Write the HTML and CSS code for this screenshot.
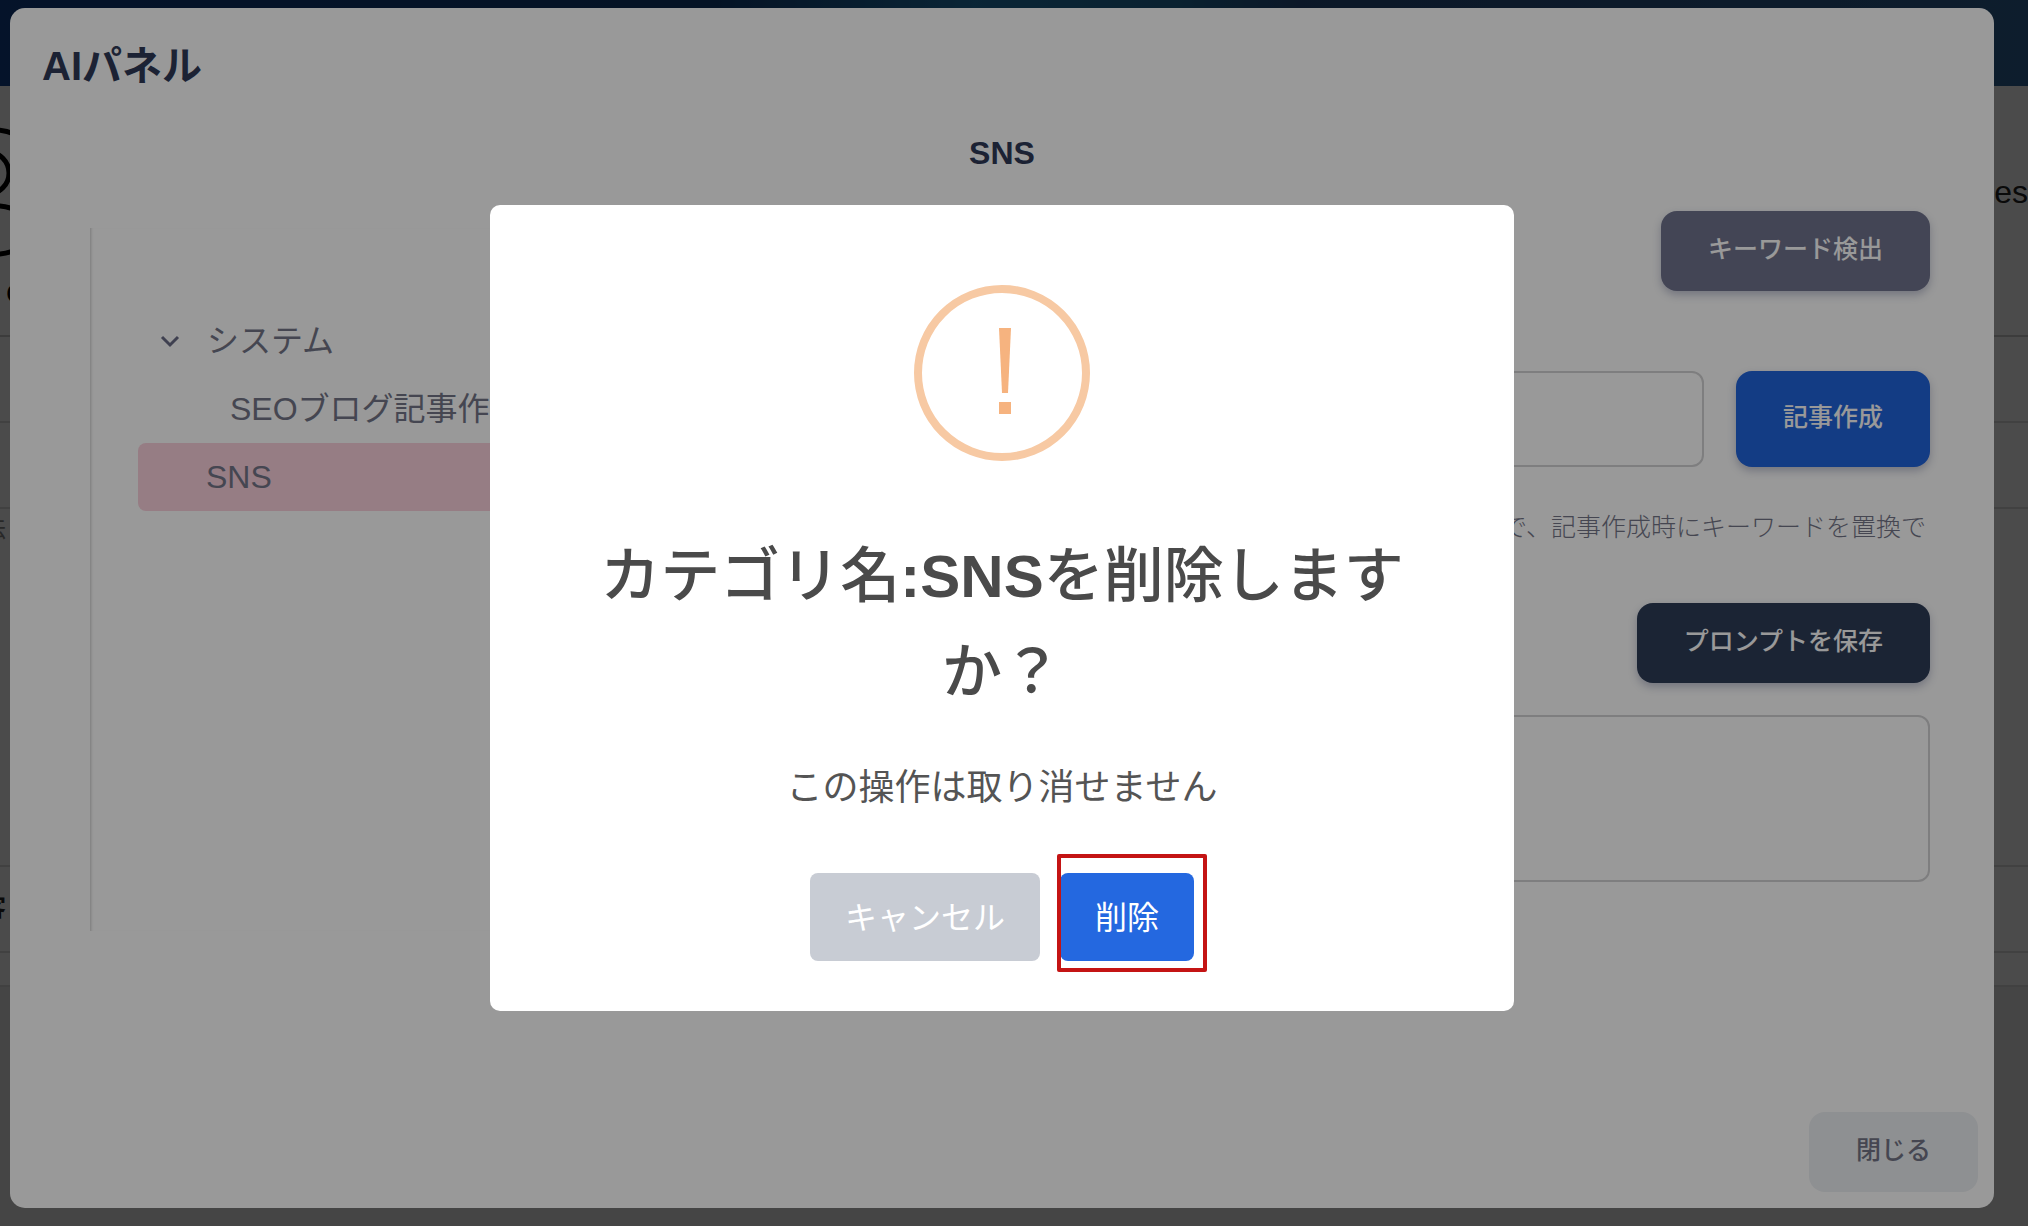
FILE: index.html
```html
<!DOCTYPE html>
<html lang="ja">
<head>
  <meta charset="UTF-8" />
  <meta name="viewport" content="width=device-width, initial-scale=1" />
  <title>AIパネル</title>
  <link rel="stylesheet" href="styles.css">
</head>
<body>
  <!-- Page behind the panel -->
  <div class="page">
    <div class="page-header"></div>
    <div class="page-bar">
      <div class="page-user">
        <svg class="avatar" width="20" height="140" viewBox="0 0 20 140" fill="none" stroke="#000" stroke-width="5">
          <path d="M-4 10C2 10 7 11 14 14" />
          <circle cx="-12" cy="53" r="21" />
          <ellipse cx="-3" cy="110" rx="32" ry="24" />
        </svg>
        <span>C</span>
      </div>
      <span class="page-crumb">Pages</span>
    </div>
    <div class="page-row"></div>
    <div class="page-row"></div>
    <div class="page-row page-row-tall"><span>法</span></div>
    <div class="page-row"><b>客</b></div>
    <div class="page-row page-row-last"></div>
  </div>

  <!-- AI panel -->
  <div class="overlay overlay-panel">
    <div class="panel">
      <h1 class="panel-title">AIパネル</h1>
      <h2 class="panel-category">SNS</h2>

      <div class="panel-body">
        <div class="tree">
          <div class="tree-row">
            <svg class="chevron" width="22" height="22" viewBox="0 0 22 22" fill="none" stroke="#6a6c86" stroke-width="3">
              <path d="M3 10l8 8 8-8" />
            </svg>
            <span>システム</span>
          </div>
          <div class="tree-row tree-child">SEOブログ記事作成</div>
          <div class="tree-row tree-leaf active">SNS</div>
        </div>

        <form class="prompt">
          <button type="button" class="btn btn-gray">キーワード検出</button>
          <div class="keyword-row">
            <input type="text" class="field" id="keyword" aria-label="キーワード" />
            <button type="button" class="btn btn-blue">記事作成</button>
          </div>
          <p class="help">で、記事作成時にキーワードを置換で</p>
          <button type="button" class="btn btn-navy">プロンプトを保存</button>
          <textarea class="field field-area" id="prompt" aria-label="プロンプト"></textarea>
        </form>
      </div>

      <div class="panel-footer">
        <button type="button" class="btn btn-light">閉じる</button>
      </div>
    </div>
  </div>

  <!-- Delete confirmation -->
  <div class="overlay overlay-dialog">
    <div class="dialog" role="alertdialog" aria-labelledby="dialogTitle" aria-describedby="dialogText">
      <svg class="dialog-icon" width="176" height="176" viewBox="0 0 176 176">
        <circle cx="88" cy="88" r="84" fill="none" stroke="#f7c9a3" stroke-width="8" />
        <path d="M85 43h12l-3 65h-6z" fill="#f6b37f" />
        <path d="M85 117h12v12h-12z" fill="#f6b37f" />
      </svg>
      <h2 class="dialog-title" id="dialogTitle">カテゴリ名<b>:SNS</b>を削除しますか？</h2>
      <p class="dialog-text" id="dialogText">この操作は取り消せません</p>
      <div class="dialog-actions">
        <button type="button" class="dialog-btn cancel">キャンセル</button>
        <button type="button" class="dialog-btn confirm">削除</button>
      </div>
    </div>
  </div>
</body>
</html>
```
FILE: styles.css
```css
* { box-sizing: border-box; }
body { margin: 0; font-family: "Liberation Sans", "Noto Sans CJK JP", sans-serif; font-size: 32px; color: #747688; }
h1, h2, p { margin: 0; }
button, input, textarea { font-family: inherit; }

/* page behind */
.page { height: 100vh; overflow: hidden; background: #e8e8e8; color: #222; }
.page-header { height: 86px; background: linear-gradient(90deg, #11408c 0%, #11407c 35%, #207cb4 48%, #1e6fa0 58%, #264f86 64%, #2d6296 100%); }
.page-bar { display: flex; justify-content: space-between; height: 251px; padding-top: 34px; background: #fafafa; border-bottom: 2px solid #c8c8c8; }
.page-user { display: flex; flex-direction: column; }
.page-user span { margin: 14px 0 0 6px; font-size: 28px; line-height: 40px; color: #000; }
.page-crumb { padding-top: 52px; line-height: 40px; }
.avatar { display: block; }
.page-row { display: flex; align-items: center; height: 86px; padding-bottom: 2px; background: #fafafa; border-bottom: 2px solid #dadada; font-size: 24px; }
.page-row span, .page-row b { margin-left: -18px; line-height: 32px; }
.page-row span { color: #888; }
.page-row-tall { height: 358px; align-items: flex-start; padding-top: 4px; }
.page-row-last { height: 34px; }

.overlay { position: fixed; top: 0; left: 0; width: 100%; height: 100%; }
.overlay-panel { padding: 8px 34px 18px 10px; background: rgba(0, 0, 0, 0.5); }
.overlay-dialog { display: flex; align-items: center; justify-content: center; padding: 0 24px 10px 0; background: rgba(0, 0, 0, 0.4); }

/* AI panel */
.panel { display: flex; flex-direction: column; height: 100%; background: #fff; border-radius: 15px; }
.panel-title { padding: 33px 32px 0; font-size: 40px; line-height: 50px; color: #2f3a57; }
.panel-category { margin-top: 42px; font-size: 32px; line-height: 40px; text-align: center; color: #2f3a57; }
.panel-body { display: flex; justify-content: space-between; margin-top: 38px; padding: 0 64px 0 80px; }

.tree { flex: 0 0 32%; height: 703px; margin-top: 17px; padding: 79px 48px 0; box-shadow: inset 3px 0 3px -2px rgba(0, 0, 0, 0.2); }
.tree-row { display: flex; align-items: center; height: 68px; padding-bottom: 6px; white-space: nowrap; }
.tree-child { padding-left: 92px; }
.tree-leaf { padding: 0 0 0 68px; }
.tree-row.active { background: #fbd0dd; border-radius: 8px; }
.chevron { margin: 0 26px 0 21px; }

.prompt { display: flex; flex-direction: column; align-items: flex-end; flex: 0 0 60%; }
.keyword-row { display: flex; gap: 32px; width: 100%; margin-top: 80px; }
.field { border: 2px solid #d2d2d4; border-radius: 12px; background: #fff; padding: 16px 24px; font-size: 32px; }
.keyword-row .field { flex: 1; min-width: 0; height: 96px; }
.field-area { display: block; width: 100%; height: 167px; margin-top: 32px; resize: none; }
.help { margin: 40px 4px 56px 0; font-size: 25px; font-weight: 300; line-height: 40px; }

.btn { height: 80px; padding: 0 47px 8px; border: 0; border-radius: 16px; font-size: 25px; font-weight: 500; color: #fff; white-space: nowrap; box-shadow: 0 4px 8px rgba(50, 60, 110, 0.3); }
.btn-gray { background: #70738e; }
.btn-blue { height: 96px; background: #2164dc; }
.btn-navy { background: #2d3c57; }
.btn-light { background: #edf0f3; color: #747688; box-shadow: none; }
.panel-footer { display: flex; justify-content: flex-end; margin-top: auto; padding: 16px; }

/* confirm dialog */
.dialog { display: flex; flex-direction: column; align-items: center; width: 1024px; max-width: 100%; padding: 80px 100px 50px; background: #fff; border-radius: 10px; text-align: center; }
.dialog-title { margin-top: 68px; font-size: 60px; font-weight: 500; line-height: 96px; color: #4a4a4a; }
.dialog-title b { font-weight: bold; }
.dialog-text { margin-top: 38px; font-size: 36px; line-height: 58px; color: #545454; }
.dialog-actions { display: flex; gap: 20px; margin-top: 56px; }
.dialog-btn { position: relative; height: 88px; padding: 0 35px 4px; border: 0; border-radius: 8px; font-size: 32px; color: #fff; }
.cancel { background: #c8ccd4; }
.confirm { background: #2468e0; }
.confirm::after { content: ""; position: absolute; top: -19px; right: -13px; bottom: -11px; left: -3px; border: 4px solid #c41414; border-radius: 2px; }
```
